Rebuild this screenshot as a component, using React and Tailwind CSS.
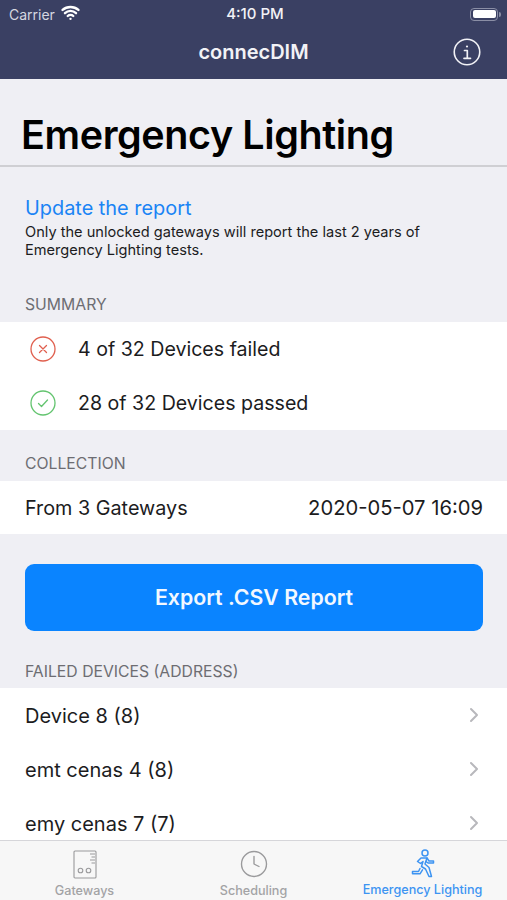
import React from 'react';
import { ChevronRight, Clock, Wifi } from 'lucide-react';

const SectionLabel = ({ children, className }) => (
    <div className={`px-[25px] text-[15.75px] leading-[18px] text-[#6d6d72] ${className}`}>{children}</div>
);

const StatusIcon = ({ failed }) => (
    <svg width="26" height="26" viewBox="0 0 26 26" fill="none" stroke={failed ? '#e0604f' : '#63c46f'} strokeWidth="1.3" strokeLinecap="round" strokeLinejoin="round">
        <circle cx="13" cy="13" r="12" />
        {failed ? <path d="M9.5 9.5l7 7M16.5 9.5l-7 7" /> : <path d="M8.5 13.5l3 3 6-6.5" />}
    </svg>
);

const DeviceRow = ({ name }) => (
    <div className="flex h-[54px] shrink-0 items-center justify-between pl-[25px] pr-[21px] text-[20px] text-[#1c1c1e]">
        <span className="translate-y-[1px]">{name}</span>
        <ChevronRight className="h-[24px] w-[24px] text-[#b8b8bc]" strokeWidth={2} />
    </div>
);

const App = () => {
    return (
        <div className="flex h-[900px] w-[507px] flex-col overflow-hidden bg-[#efeff4] font-['Inter',sans-serif]">
            {/* Status + nav bar */}
            <div className="h-[79px] shrink-0 bg-[#3a4063] text-[#f2f2f6]">
                <div className="flex h-[27px] items-center justify-between pl-[9px] pr-[6px] pt-[1px] text-[14px]">
                    <div className="flex w-[120px] items-center gap-[6px] text-[#d5d7e0]">
                        <span>Carrier</span>
                        <Wifi className="h-[19px] w-[19px] -translate-y-[2px] text-white" strokeWidth={3} />
                    </div>
                    <span className="text-[15px] font-medium">4:10 PM</span>
                    <div className="flex w-[120px] items-center justify-end">
                        <div className="flex h-[13px] w-[28px] items-center rounded-[4px] border border-[#8a8ea5] p-[1.5px]">
                            <div className="h-full w-full rounded-[2px] bg-white" />
                        </div>
                        <div className="ml-[1px] h-[5px] w-[2px] rounded-r-sm bg-[#8a8ea5]" />
                    </div>
                </div>
                <div className="relative flex h-[52px] items-center justify-center pb-[3px] text-[20px] font-semibold">
                    connecDIM
                    <svg className="absolute right-[26px] top-[11px]" width="28" height="28" viewBox="0 0 28 28" fill="none" stroke="currentColor" strokeLinecap="round" strokeLinejoin="round">
                        <circle cx="14" cy="14" r="12.75" strokeWidth="1.6" />
                        <circle cx="14" cy="8.5" r="1.1" fill="currentColor" stroke="none" />
                        <path d="M11.5 12.5H14.3V20M11 20.3h6.5" strokeWidth="1.7" />
                    </svg>
                </div>
            </div>

            {/* Scrolling content */}
            <div className="flex min-h-0 flex-1 flex-col overflow-hidden">
                <div className="h-[88px] shrink-0 border-b-2 border-[#cfcfd3] pl-[21px] pt-[29px] text-[39.5px] font-semibold leading-[54px] tracking-[-0.4px] text-black">
                    Emergency Lighting
                </div>

                <div className="px-[25px] pt-[27px]">
                    <div className="text-[19.9px] leading-[28px] text-[#1a84f5]">Update the report</div>
                    <p className="mt-[1px] whitespace-nowrap text-[14.6px] leading-[18px] text-[#1c1c1e]">
                        Only the unlocked gateways will report the last 2 years of
                        <br />
                        Emergency Lighting tests.
                    </p>
                </div>

                <SectionLabel className="mt-[37px]">SUMMARY</SectionLabel>
                <div className="mt-[8px] bg-white">
                    <div className="flex h-[54px] items-center gap-[22px] pl-[30px] text-[19.6px] text-[#1c1c1e]">
                        <StatusIcon failed />
                        <span className="translate-y-[1px]">4 of 32 Devices failed</span>
                    </div>
                    <div className="flex h-[54px] items-center gap-[22px] pl-[30px] text-[19.6px] text-[#1c1c1e]">
                        <StatusIcon />
                        <span className="translate-y-[1px]">28 of 32 Devices passed</span>
                    </div>
                </div>

                <SectionLabel className="mt-[25px]">COLLECTION</SectionLabel>
                <div className="mt-[8px] flex h-[53px] shrink-0 items-center justify-between bg-white pl-[25px] pr-[24px] text-[19.8px] text-[#1c1c1e]">
                    <span className="translate-y-[1px]">From 3 Gateways</span>
                    <span className="translate-y-[1px] text-[20.2px]">2020-05-07 16:09</span>
                </div>

                <button className="ml-[25px] mr-[24px] mt-[30px] h-[67px] shrink-0 rounded-[9px] bg-[#0a84ff] text-[21.3px] font-semibold text-[#f2f8ff]">
                    Export .CSV Report
                </button>

                <SectionLabel className="mt-[32px]">FAILED DEVICES (ADDRESS)</SectionLabel>
                <div className="mt-[7px] flex-1 bg-white">
                    <DeviceRow name="Device 8 (8)" />
                    <DeviceRow name="emt cenas 4 (8)" />
                    <DeviceRow name="emy cenas 7 (7)" />
                </div>
            </div>

            {/* Tab bar */}
            <div className="grid h-[60px] shrink-0 grid-cols-3 border-t border-[#d6d6da] bg-[#f7f7f7] text-[12.6px] font-medium">
                <div className="flex flex-col items-center text-[#a3a3a5]">
                    <svg className="mt-[9px]" width="24" height="29" viewBox="0 0 24 29" fill="none" stroke="#9a9a9c" strokeWidth="1.1">
                        <rect x="1" y="1" width="22" height="27" rx="1" />
                        <circle cx="7.5" cy="20.5" r="2.3" />
                        <circle cx="15.5" cy="20.5" r="2.3" />
                        <path d="M17 4h5M18.5 7h3.5M17 10h5M18.5 13h3.5" />
                    </svg>
                    <span className="mt-[5px] leading-[14px]">Gateways</span>
                </div>
                <div className="flex flex-col items-center text-[#a3a3a5]">
                    <Clock className="mt-[8px] h-[30px] w-[30px] text-[#9a9a9c]" strokeWidth={1.1} />
                    <span className="mt-[5px] leading-[14px]">Scheduling</span>
                </div>
                <div className="flex flex-col items-center text-[#3d94f2]">
                    <svg className="mt-[8px]" width="24" height="30" viewBox="0 0 24 30" fill="none" stroke="#3d94f2" strokeWidth="1.5" strokeLinecap="round" strokeLinejoin="round">
                        <circle cx="14" cy="4" r="3" />
                        <path d="M6.5 12.5l3.5-3.5h6l-2 6 4 3.5 2.5 9h-2.5l-3.5-7.5-4-2.5 1.5-5-2.5 2z" />
                        <path d="M16 9l2 3h4.5v2H17l-2-1.5" />
                        <path d="M9 19.5l-1.5 3H1.5v2.3h7.5l2.5-4" />
                    </svg>
                    <span className="mt-[4px] whitespace-nowrap leading-[14px]">Emergency Lighting</span>
                </div>
            </div>
        </div>
    );
};

export default App;
